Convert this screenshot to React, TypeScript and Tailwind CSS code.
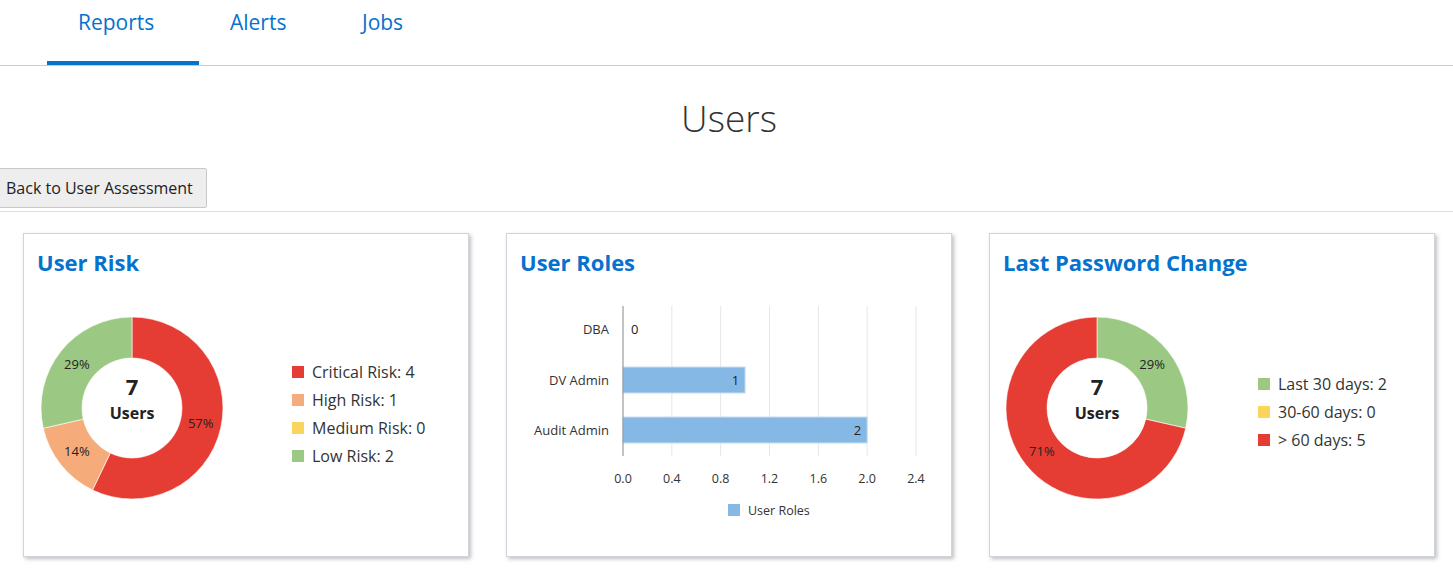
import React from 'react';

const FONT = '"Open Sans", "Noto Sans", sans-serif';

type Slice = { value: number; color: string; label: string };

const polar = (cx: number, cy: number, r: number, deg: number) => {
  const a = (deg * Math.PI) / 180;
  return [cx + r * Math.sin(a), cy - r * Math.cos(a)];
};

const arcPath = (cx: number, cy: number, r: number, R: number, a0: number, a1: number) => {
  const large = a1 - a0 > 180 ? 1 : 0;
  const [x0, y0] = polar(cx, cy, R, a0);
  const [x1, y1] = polar(cx, cy, R, a1);
  const [x2, y2] = polar(cx, cy, r, a1);
  const [x3, y3] = polar(cx, cy, r, a0);
  return `M${x0} ${y0} A${R} ${R} 0 ${large} 1 ${x1} ${y1} L${x2} ${y2} A${r} ${r} 0 ${large} 0 ${x3} ${y3} Z`;
};

const Donut: React.FC<{ slices: Slice[] }> = ({ slices }) => {
  const total = slices.reduce((s, x) => s + x.value, 0);
  let start = 0;
  return (
    <svg width="200" height="200" viewBox="0 0 200 200" className="block" style={{ fontFamily: FONT }}>
      {slices.map((s, i) => {
        if (!s.value) return null;
        const a0 = start;
        const a1 = start + (s.value / total) * 360;
        start = a1;
        const [lx, ly] = polar(100, 100, 70.5, (a0 + a1) / 2);
        return (
          <g key={i}>
            <path d={arcPath(100, 100, 50, 91, a0, a1)} fill={s.color} stroke="#fff" strokeWidth="0.6" />
            <text x={lx} y={ly + 4.5} textAnchor="middle" fontSize="13" fill="#222">
              {s.label}
            </text>
          </g>
        );
      })}
      <text x="100" y="87" textAnchor="middle" fontSize="22" fontWeight="700" fill="#222">7</text>
      <text x="100" y="111" textAnchor="middle" fontSize="16" fontWeight="700" fill="#222">Users</text>
    </svg>
  );
};

const Legend: React.FC<{ items: { color: string; text: string }[] }> = ({ items }) => (
  <div className="flex flex-col gap-[9px] text-[16px] text-[#333] leading-[19px]">
    {items.map((it) => (
      <div key={it.text} className="flex items-center gap-[8px]">
        <span className="w-[12px] h-[12px] shrink-0" style={{ background: it.color }} />
        <span>{it.text}</span>
      </div>
    ))}
  </div>
);

const Card: React.FC<{ title: string; children: React.ReactNode }> = ({ title, children }) => (
  <div className="w-[446px] h-[324px] bg-white border border-[#cfd5db] shadow-[2px_2px_4px_rgba(0,0,0,0.25)] shrink-0">
    <h2 className="pl-[13px] pt-[14px] text-[22px] font-bold text-[#0572ce] leading-[28px]">{title}</h2>
    {children}
  </div>
);

const BarChart: React.FC = () => {
  const x0 = 116;
  const step = 48.83;
  const ticks = ['0.0', '0.4', '0.8', '1.2', '1.6', '2.0', '2.4'];
  const rows = [
    { label: 'DBA', v: 0, y: 53 },
    { label: 'DV Admin', v: 1, y: 104 },
    { label: 'Audit Admin', v: 2, y: 154 },
  ];
  return (
    <svg width="444" height="250" viewBox="0 0 444 250" className="block" style={{ fontFamily: FONT }}>
      {ticks.map((t, i) => (
        <g key={t}>
          {i > 0 && <line x1={x0 + i * step} y1="30" x2={x0 + i * step} y2="180" stroke="#e3e6ea" strokeWidth="1" />}
          <text x={x0 + i * step} y="207" textAnchor="middle" fontSize="12.5" fill="#333">{t}</text>
        </g>
      ))}
      {rows.map((r) => {
        const w = (r.v / 0.4) * step;
        return (
          <g key={r.label}>
            <text x="102" y={r.y + 4.5} textAnchor="end" fontSize="13" fill="#333">{r.label}</text>
            {r.v > 0 && <rect x={x0} y={r.y - 13} width={w} height="26" fill="#85b8e5" stroke="#c7def3" strokeWidth="1" />}
            <text x={r.v > 0 ? x0 + w - 6 : x0 + 8} y={r.y + 4.5} textAnchor={r.v > 0 ? 'end' : 'start'} fontSize="13" fill="#222">
              {r.v}
            </text>
          </g>
        );
      })}
      <line x1={x0} y1="30" x2={x0} y2="180" stroke="#888" strokeWidth="1" />
      <rect x="221" y="228" width="12" height="12" fill="#85b8e5" />
      <text x="241" y="239" fontSize="12.5" fill="#333">User Roles</text>
    </svg>
  );
};

export default function App() {
  const tabs = [
    { name: 'Reports', w: 'w-[152px]', active: true },
    { name: 'Alerts', w: 'w-[132px]', active: false },
    { name: 'Jobs', w: 'w-[120px]', active: false },
  ];
  return (
    <div className="w-[1453px] h-[572px] bg-white overflow-hidden" style={{ fontFamily: FONT }}>
      <div className="flex pl-[47px] border-b border-[#cccccc] h-[66px]">
        {tabs.map((t) => (
          <div
            key={t.name}
            className={`${t.w} h-[65px] pl-[31px] pt-[7px] text-[21px] leading-[30px] text-[#0572ce] ${
              t.active ? 'border-b-4 border-[#0572ce]' : ''
            }`}
          >
            {t.name}
          </div>
        ))}
      </div>

      <h1 className="text-center text-[37px] font-light text-[#333] leading-[50px] mt-[27px] pl-[5px]">Users</h1>

      <div className="mt-[25px] border-b border-[#dddddd] pb-[3px]">
        <button className="h-[40px] pl-[6px] pr-[13px] bg-[#eeeeee] border border-[#c8c8c8] rounded-[2px] text-[16px] text-[#222] -ml-[1px]">
          Back to User Assessment
        </button>
      </div>

      <div className="flex gap-[37px] pl-[23px] pt-[21px]">
        <Card title="User Risk">
          <div className="flex items-center mt-[32px]">
            <div className="ml-[8px]">
              <Donut
                slices={[
                  { value: 4, color: '#e53d33', label: '57%' },
                  { value: 1, color: '#f5ac7a', label: '14%' },
                  { value: 2, color: '#9bc984', label: '29%' },
                ]}
              />
            </div>
            <div className="ml-[60px] mt-[12px]">
              <Legend
                items={[
                  { color: '#e53d33', text: 'Critical Risk: 4' },
                  { color: '#f5ac7a', text: 'High Risk: 1' },
                  { color: '#fad55c', text: 'Medium Risk: 0' },
                  { color: '#9bc984', text: 'Low Risk: 2' },
                ]}
              />
            </div>
          </div>
        </Card>

        <Card title="User Roles">
          <BarChart />
        </Card>

        <Card title="Last Password Change">
          <div className="flex items-center mt-[32px]">
            <div className="ml-[7px]">
              <Donut
                slices={[
                  { value: 2, color: '#9bc984', label: '29%' },
                  { value: 0, color: '#fad55c', label: '' },
                  { value: 5, color: '#e53d33', label: '71%' },
                ]}
              />
            </div>
            <div className="ml-[61px] mt-[8px]">
              <Legend
                items={[
                  { color: '#9bc984', text: 'Last 30 days: 2' },
                  { color: '#fad55c', text: '30-60 days: 0' },
                  { color: '#e53d33', text: '> 60 days: 5' },
                ]}
              />
            </div>
          </div>
        </Card>
      </div>
    </div>
  );
}
